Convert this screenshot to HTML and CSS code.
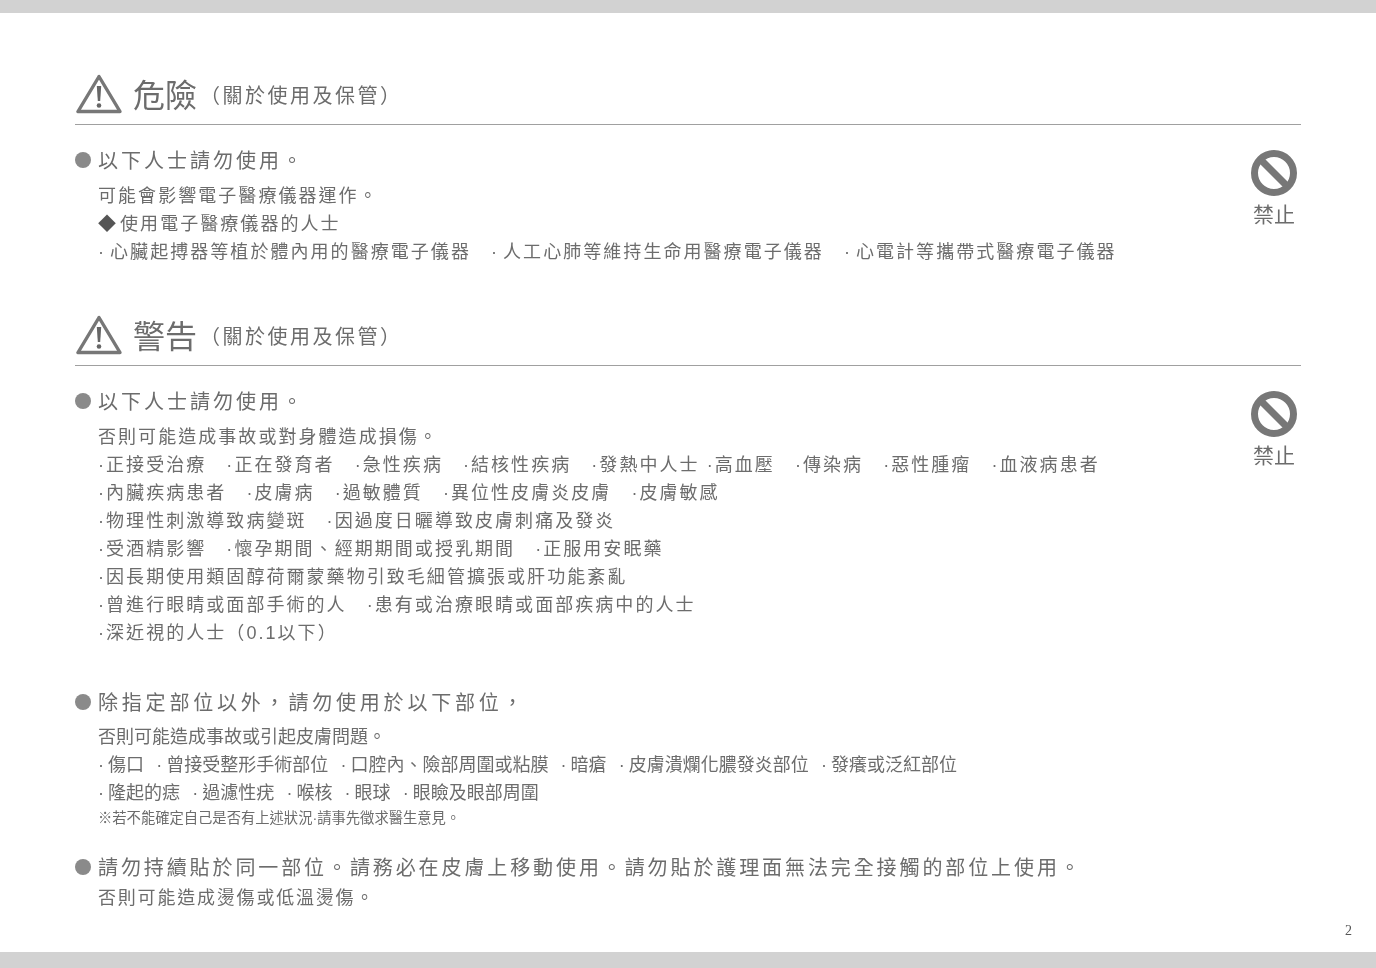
FILE: index.html
```html
<!DOCTYPE html>
<html lang="zh-Hant">
<head>
<meta charset="utf-8">
<title>危險</title>
<link rel="stylesheet" href="styles.css">
</head>
<body>
<div class="bar top-bar"></div>
<main class="page">
  <section class="section first">
    <header class="head">
      <svg class="warn" viewBox="0 0 46 40"><path d="M23 2.5 2 37.5H44Z" fill="none" stroke="#777" stroke-width="3.4" stroke-linejoin="round"/><path d="M20.8 12h4.4l-1 15h-2.4z" fill="#666"/><circle cx="23" cy="31.5" r="2.3" fill="#666"/></svg>
      <h1>危險</h1><h2>（關於使用及保管）</h2>
    </header>
    <div class="body">
      <div class="content">
        <p class="lead"><i class="dot"></i>以下人士請勿使用。</p>
        <div class="list wide gap-a">
          <p>可能會影響電子醫療儀器運作。</p>
          <p><b class="mark">◆</b>使用電子醫療儀器的人士</p>
          <p><b class="pt">·</b>心臟起搏器等植於體內用的醫療電子儀器　<b class="pt">·</b>人工心肺等維持生命用醫療電子儀器　<b class="pt">·</b>心電計等攜帶式醫療電子儀器</p>
        </div>
      </div>
      <aside class="side">
        <svg class="ban" viewBox="0 0 46 46"><circle cx="23" cy="23" r="19.5" fill="none" stroke="#777" stroke-width="7"/><path d="M9.5 9.5 36.5 36.5" stroke="#777" stroke-width="7"/></svg>
        <span class="ban-label">禁止</span>
      </aside>
    </div>
  </section>

  <section class="section second">
    <header class="head">
      <svg class="warn" viewBox="0 0 46 40"><path d="M23 2.5 2 37.5H44Z" fill="none" stroke="#777" stroke-width="3.4" stroke-linejoin="round"/><path d="M20.8 12h4.4l-1 15h-2.4z" fill="#666"/><circle cx="23" cy="31.5" r="2.3" fill="#666"/></svg>
      <h1>警告</h1><h2>（關於使用及保管）</h2>
    </header>
    <div class="body">
      <div class="content">
        <p class="lead"><i class="dot"></i>以下人士請勿使用。</p>
        <div class="list wide gap-b">
          <p>否則可能造成事故或對身體造成損傷。</p>
          <p>·正接受治療　·正在發育者　·急性疾病　·結核性疾病　·發熱中人士 ·高血壓　·傳染病　·惡性腫瘤　·血液病患者</p>
          <p>·內臟疾病患者　·皮膚病　·過敏體質　·異位性皮膚炎皮膚　·皮膚敏感</p>
          <p>·物理性刺激導致病變斑　·因過度日曬導致皮膚刺痛及發炎</p>
          <p>·受酒精影響　·懷孕期間、經期期間或授乳期間　·正服用安眠藥</p>
          <p>·因長期使用類固醇荷爾蒙藥物引致毛細管擴張或肝功能紊亂</p>
          <p>·曾進行眼睛或面部手術的人　·患有或治療眼睛或面部疾病中的人士</p>
          <p>·深近視的人士（0.1以下）</p>
        </div>

        <p class="lead lead-wide gap-c"><i class="dot"></i>除指定部位以外，請勿使用於以下部位，</p>
        <div class="list tight gap-e">
          <p>否則可能造成事故或引起皮膚問題。</p>
          <p><b class="pt">·</b>傷口 <b class="pt">·</b>曾接受整形手術部位 <b class="pt">·</b>口腔內、險部周圍或粘膜 <b class="pt">·</b>暗瘡 <b class="pt">·</b>皮膚潰爛化膿發炎部位 <b class="pt">·</b>發癢或泛紅部位</p>
          <p><b class="pt">·</b>隆起的痣 <b class="pt">·</b>過濾性疣 <b class="pt">·</b>喉核 <b class="pt">·</b>眼球 <b class="pt">·</b>眼瞼及眼部周圍</p>
        </div>
        <p class="note">※若不能確定自己是否有上述狀況·請事先徵求醫生意見。</p>

        <p class="lead lead-long gap-d"><i class="dot"></i>請勿持續貼於同一部位。請務必在皮膚上移動使用。請勿貼於護理面無法完全接觸的部位上使用。</p>
        <p class="closing">否則可能造成燙傷或低溫燙傷。</p>
      </div>
      <aside class="side">
        <svg class="ban" viewBox="0 0 46 46"><circle cx="23" cy="23" r="19.5" fill="none" stroke="#777" stroke-width="7"/><path d="M9.5 9.5 36.5 36.5" stroke="#777" stroke-width="7"/></svg>
        <span class="ban-label">禁止</span>
      </aside>
    </div>
  </section>
  <footer class="page-no">2</footer>
</main>
<div class="bar bottom-bar"></div>
</body>
</html>
```
FILE: styles.css
```css
* { box-sizing: border-box; }
html, body { margin: 0; padding: 0; }
body {
  width: 1376px;
  height: 968px;
  overflow: hidden;
  display: flex;
  flex-direction: column;
  background: #fff;
  color: #6c6c6c;
  font-family: "Liberation Sans", "Noto Sans CJK TC", sans-serif;
  font-weight: 400;
}
p, h1, h2 { margin: 0; font-weight: 400; }
.bar { background: #d2d2d2; flex: none; }
.top-bar { height: 13px; }
.bottom-bar { height: 16px; }
.page {
  flex: 1;
  display: flex;
  flex-direction: column;
  padding: 0 75px;
  filter: blur(.4px);
}
.first { padding-top: 61px; }
.second { padding-top: 49px; }
.head {
  display: flex;
  align-items: center;
  height: 51px;
  padding-bottom: 11px;
  border-bottom: 1px solid #a0a0a0;
}
.warn { width: 46px; height: 40px; margin-left: 1px; flex: none; }
h1 {
  margin: 4px 0 0 11px;
  font-size: 32px;
  line-height: 40px;
  white-space: nowrap;
}
h2 {
  margin: 5px 0 0 3px;
  font-size: 20px;
  line-height: 40px;
  letter-spacing: 2.5px;
  white-space: nowrap;
}
.body { display: flex; justify-content: space-between; align-items: flex-start; }
.content { flex: 1; min-width: 0; }
.lead {
  position: relative;
  margin: 21px 0 0 23px;
  font-size: 20px;
  line-height: 30px;
  letter-spacing: 3px;
  white-space: nowrap;
}
.lead-wide { letter-spacing: 3.8px; }
.lead-long { letter-spacing: 2.9px; }
.dot {
  position: absolute;
  left: -23px;
  top: 6px;
  width: 16px;
  height: 16px;
  border-radius: 50%;
  background: #8a8a8a;
}
.list { margin-left: 23px; }
.list p { white-space: nowrap; line-height: 28px; font-size: 18px; }
.wide p { letter-spacing: 2.05px; }
.tight p { word-spacing: 7.2px; }
.pt { font-weight: 400; margin-right: 4px; }
.mark { font-weight: 400; color: #555; margin-right: 2px; }
.gap-a { margin-top: 6px; }
.gap-b { margin-top: 6px; }
.gap-e { margin-top: 5px; }
.lead.gap-c { margin-top: 41px; }
.lead.gap-d { margin-top: 25px; }
.note {
  margin: 1px 0 0 23px;
  font-size: 14.3px;
  line-height: 20px;
  white-space: nowrap;
}
.closing {
  margin: 1px 0 0 23px;
  font-size: 18px;
  line-height: 28px;
  letter-spacing: 1.8px;
  white-space: nowrap;
}
.side {
  flex: none;
  width: 46px;
  margin: 25px 4px 0 0;
  display: flex;
  flex-direction: column;
  align-items: center;
}
.ban { width: 46px; height: 46px; display: block; }
.ban-label {
  font-size: 21px;
  line-height: 30px;
  margin-top: 4px;
  white-space: nowrap;
}
.page-no {
  margin-top: auto;
  margin-right: -51px;
  margin-bottom: 11px;
  text-align: right;
  font-family: "Liberation Serif", serif;
  font-size: 14px;
  line-height: 20px;
  color: #555;
}
```
